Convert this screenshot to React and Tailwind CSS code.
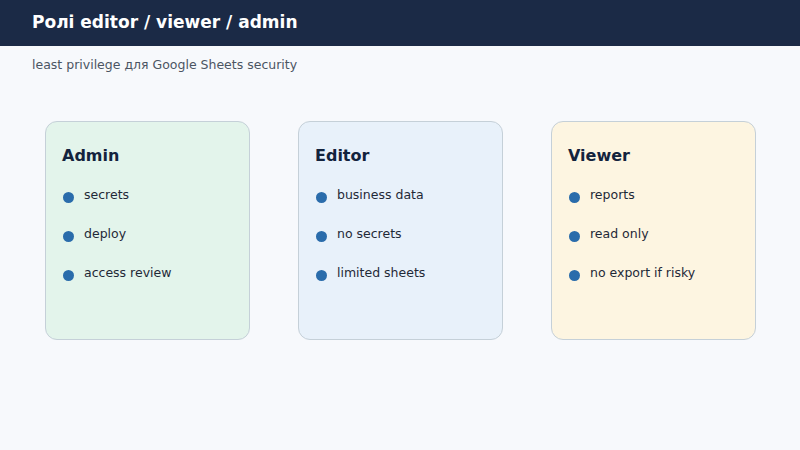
export default function App() {
  const cards = [
    { t: "Admin", bg: "bg-[#e3f4eb]", items: ["secrets", "deploy", "access review"] },
    { t: "Editor", bg: "bg-[#e8f1fa]", items: ["business data", "no secrets", "limited sheets"] },
    { t: "Viewer", bg: "bg-[#fdf5e1]", items: ["reports", "read only", "no export if risky"] },
  ];
  return (
    <div className="w-[800px] h-[450px] bg-[#f7f9fc] overflow-hidden" style={{ fontFamily: '"DejaVu Sans", sans-serif' }}>
      <div className="h-[46px] bg-[#1b2a46] flex items-center pl-[32px]">
        <span className="text-white font-bold text-[17px]">Ролі editor / viewer / admin</span>
      </div>
      <div className="pl-[32px] pt-[10px] text-[12.5px] text-[#4b5563]">least privilege для Google Sheets security</div>
      <div className="flex gap-[48px] pl-[45px] pt-[46px]">
        {cards.map((c) => (
          <div key={c.t} className={`w-[205px] h-[219px] rounded-[12px] border border-[#c5d0d8] ${c.bg} pl-[16px] pt-[22px]`}>
            <div className="text-[16px] font-bold text-[#13233d]">{c.t}</div>
            <div className="mt-[19px] flex flex-col gap-[21px]">
              {c.items.map((i) => (
                <div key={i} className="flex items-center h-[18px] text-[12.5px] text-[#1f2937]">
                  <span className="w-[11px] h-[11px] rounded-full bg-[#2a6cab] ml-[1px] mt-[4px] mr-[10px]" />
                  {i}
                </div>
              ))}
            </div>
          </div>
        ))}
      </div>
    </div>
  );
}
